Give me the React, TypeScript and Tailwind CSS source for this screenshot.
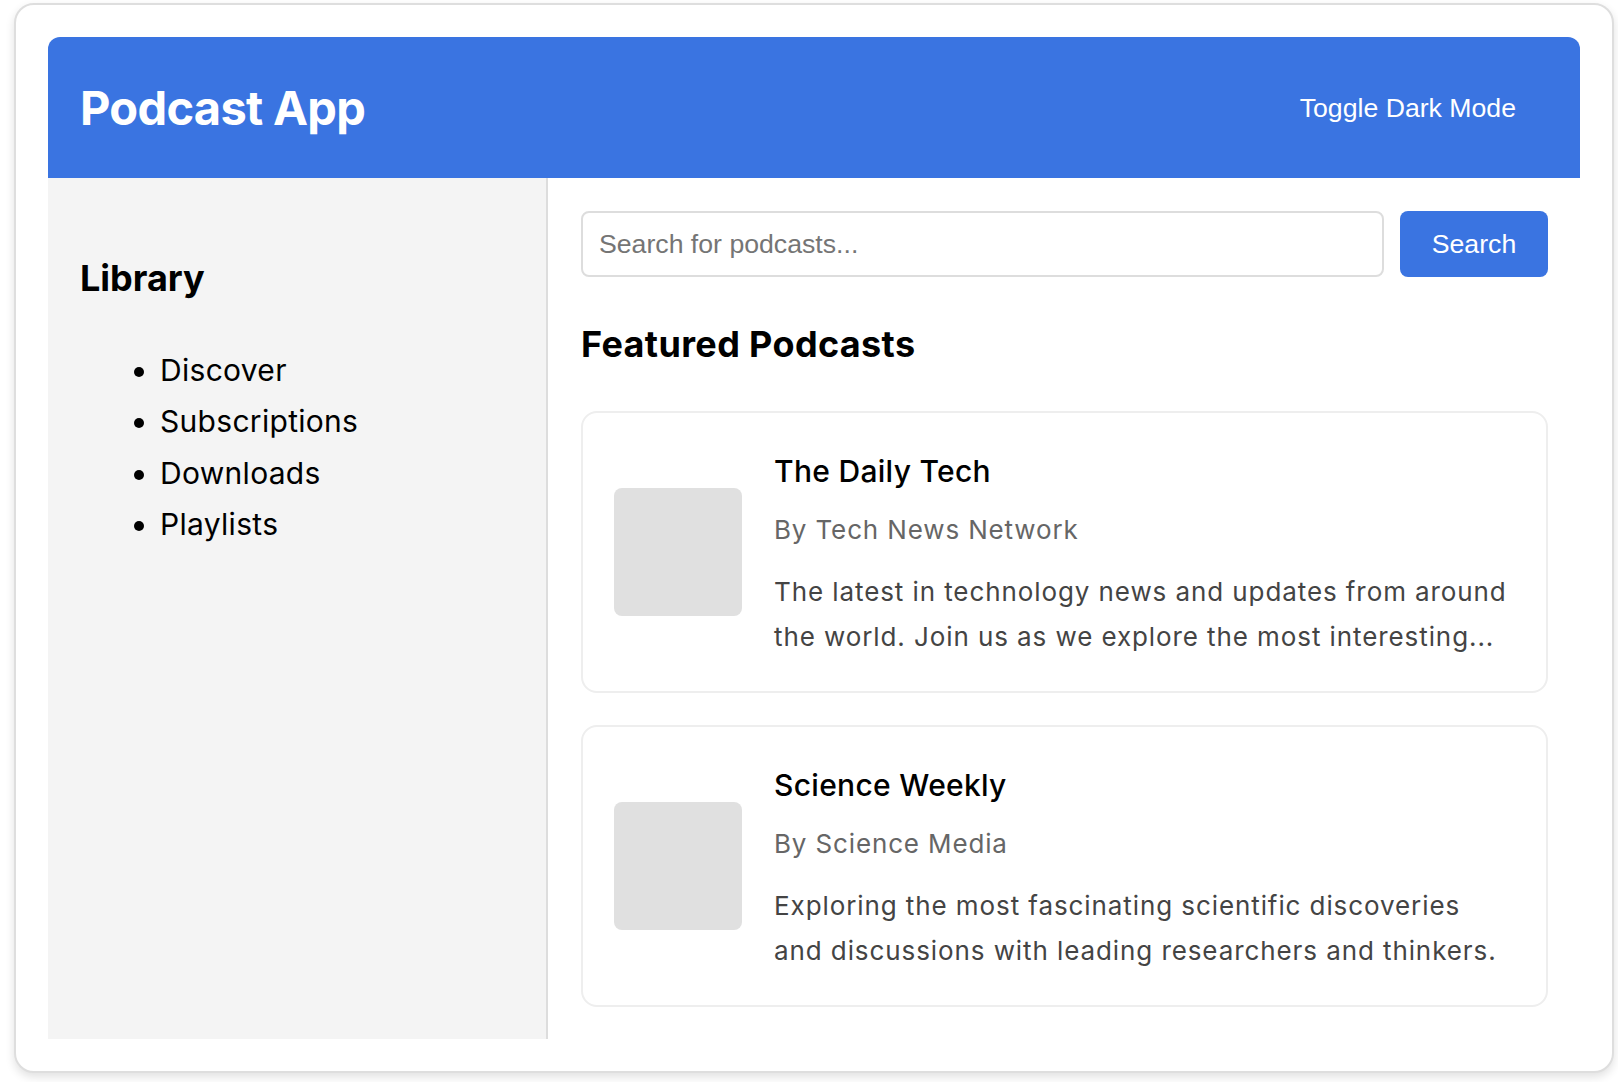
import React from "react";

const podcasts = [
  {
    title: "The Daily Tech",
    author: "By Tech News Network",
    desc: "The latest in technology news and updates from around the world. Join us as we explore the most interesting...",
  },
  {
    title: "Science Weekly",
    author: "By Science Media",
    desc: "Exploring the most fascinating scientific discoveries and discussions with leading researchers and thinkers.",
  },
];

export default function App() {
  return (
    <div className="min-h-screen bg-white pl-[14px] pt-[3px] font-['Inter',sans-serif] text-black">
      <div className="w-[1600px] rounded-[20px] border-2 border-[#dedede] bg-white p-8 shadow-[0_4px_10px_rgba(0,0,0,0.12)]">
        <header className="flex h-[141px] items-center justify-between rounded-t-[12px] bg-[#3a74e1] pl-8 pr-8">
          <h1 className="text-[47px] font-bold leading-none tracking-[-0.015em] text-white">Podcast App</h1>
          <button className="px-8 py-4 font-['Liberation_Sans',Arial,sans-serif] text-[26.67px] leading-[30px] text-white">
            Toggle Dark Mode
          </button>
        </header>
        <div className="flex">
          <aside className="w-[500px] shrink-0 border-r-2 border-[#dddddd] bg-[#f4f4f4] px-8 pt-8">
            <h2 className="mt-[46px] text-[36px] font-bold leading-[44px]">Library</h2>
            <ul className="mt-[45px] list-disc pl-20 text-[30px] leading-[51.3px] tracking-[0.01em]">
              <li>Discover</li>
              <li>Subscriptions</li>
              <li>Downloads</li>
              <li>Playlists</li>
            </ul>
          </aside>
          <main className="flex-1 pb-8 pl-[33px] pr-8 pt-[33px]">
            <div className="flex gap-4">
              <input
                type="text"
                placeholder="Search for podcasts..."
                className="h-[66px] flex-1 rounded-[8px] border-2 border-[#dddddd] bg-white px-4 font-['Liberation_Sans',Arial,sans-serif] text-[26.67px] text-black outline-none placeholder:text-[#757575]"
              />
              <button className="h-[66px] w-[148px] rounded-[8px] bg-[#3a74e1] font-['Liberation_Sans',Arial,sans-serif] text-[26.67px] text-white">
                Search
              </button>
            </div>
            <h2 className="mt-[45px] text-[36px] font-bold leading-[44px] tracking-[0.01em]">Featured Podcasts</h2>
            <div className="mt-[45px] flex flex-col gap-[32px]">
              {podcasts.map((p) => (
                <div
                  key={p.title}
                  className="flex items-center gap-8 rounded-[16px] border-2 border-[#eeeeee] bg-white px-[31px] py-[31px]"
                >
                  <div className="h-[128px] w-[128px] shrink-0 rounded-[8px] bg-[#e0e0e0]" />
                  <div className="min-w-0 flex-1">
                    <h3 className="mb-[9px] text-[30px] font-medium leading-[54px] tracking-[0.01em]">{p.title}</h3>
                    <p className="mb-[15px] text-[26px] leading-[46.8px] tracking-[0.033em] text-[#666666]">{p.author}</p>
                    <p className="text-[26px] leading-[45.5px] tracking-[0.035em] text-[#444444]">{p.desc}</p>
                  </div>
                </div>
              ))}
            </div>
          </main>
        </div>
      </div>
    </div>
  );
}
